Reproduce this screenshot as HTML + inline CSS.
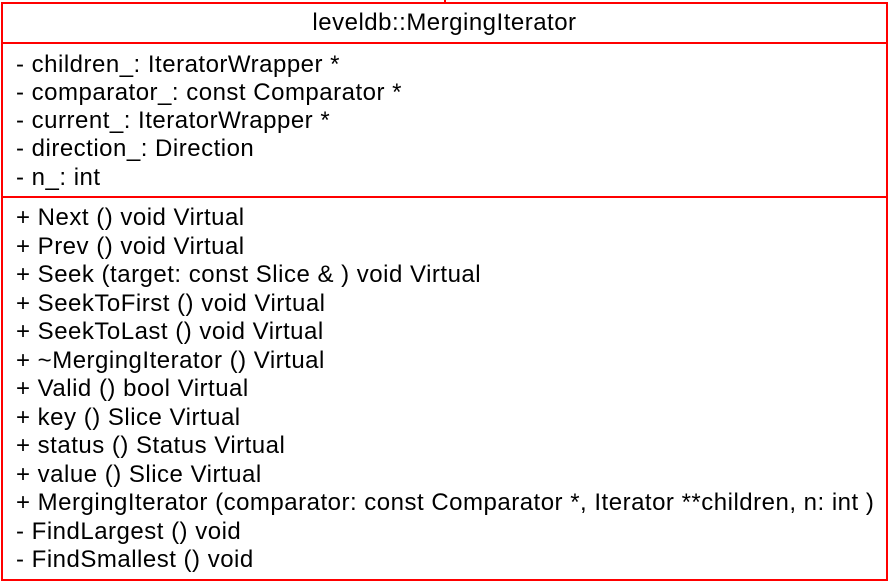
<!DOCTYPE html>
<html><head><meta charset="utf-8"><style>
html,body{margin:0;padding:0;background:#fff;width:889px;height:582px;overflow:hidden}
.box{position:absolute;left:1px;top:2px;width:883px;height:575px;border:2px solid #f00;}
.hl{position:absolute;left:1px;width:887px;height:2px;background:#f00}
.t{position:absolute;font-family:"Liberation Sans",Arial,sans-serif;font-size:24px;letter-spacing:0.5px;color:#000;white-space:pre;line-height:28px}
</style></head><body>
<div style="position:absolute;left:444px;top:0;width:2px;height:3px;background:#f00"></div>
<div class="box"></div>
<div class="hl" style="top:42px"></div>
<div class="hl" style="top:196px"></div>
<div class="t" style="left:0;width:889px;text-align:center;top:9px">leveldb::MergingIterator</div>
<div class="t" style="left:16px;top:51px">- children_: IteratorWrapper *</div>
<div class="t" style="left:16px;top:79px">- comparator_: const Comparator *</div>
<div class="t" style="left:16px;top:107px">- current_: IteratorWrapper *</div>
<div class="t" style="left:16px;top:135px">- direction_: Direction</div>
<div class="t" style="left:16px;top:164px">- n_: int</div>
<div class="t" style="left:16px;top:204px">+ Next () void Virtual</div>
<div class="t" style="left:16px;top:233px">+ Prev () void Virtual</div>
<div class="t" style="left:16px;top:261px">+ Seek (target: const Slice &amp; ) void Virtual</div>
<div class="t" style="left:16px;top:290px">+ SeekToFirst () void Virtual</div>
<div class="t" style="left:16px;top:318px">+ SeekToLast () void Virtual</div>
<div class="t" style="left:16px;top:347px">+ ~MergingIterator () Virtual</div>
<div class="t" style="left:16px;top:375px">+ Valid () bool Virtual</div>
<div class="t" style="left:16px;top:404px">+ key () Slice Virtual</div>
<div class="t" style="left:16px;top:432px">+ status () Status Virtual</div>
<div class="t" style="left:16px;top:461px">+ value () Slice Virtual</div>
<div class="t" style="left:16px;top:489px">+ MergingIterator (comparator: const Comparator *, Iterator **children, n: int )</div>
<div class="t" style="left:16px;top:518px">- FindLargest () void</div>
<div class="t" style="left:16px;top:546px">- FindSmallest () void</div>
</body></html>
